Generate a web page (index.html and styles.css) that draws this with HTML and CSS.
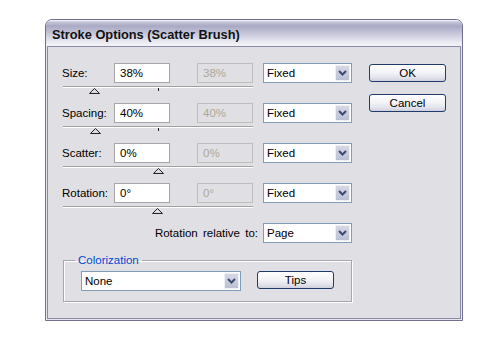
FILE: index.html
```html
<!DOCTYPE html>
<html>
<head>
<meta charset="utf-8">
<link rel="stylesheet" href="styles.css">
</head>
<body>
<div class="dialog">
  <div class="title">Stroke Options (Scatter Brush)</div>
  <div class="client">
    <div class="main">
      <div class="left">
        <div class="row">
          <div class="fields">
            <span class="label">Size:</span>
            <span class="input">38%</span>
            <span class="input disabled">38%</span>
            <span class="select"><span class="sel-text">Fixed</span><span class="arrow"><svg width="9" height="6" viewBox="0 0 9 6"><path d="M1 1 L4.5 4.5 L8 1" fill="none" stroke="#3c4a6c" stroke-width="2"/></svg></span></span>
          </div>
          <div class="slider">
            <span class="tick"></span>
            <svg class="thumb" style="left:26px" width="11" height="6" viewBox="0 0 11 6"><polygon points="5.5,0.5 10.5,5.5 0.5,5.5" fill="#dcdcdc" stroke="#222" stroke-width="1"/></svg>
          </div>
        </div>
        <div class="row">
          <div class="fields">
            <span class="label">Spacing:</span>
            <span class="input">40%</span>
            <span class="input disabled">40%</span>
            <span class="select"><span class="sel-text">Fixed</span><span class="arrow"><svg width="9" height="6" viewBox="0 0 9 6"><path d="M1 1 L4.5 4.5 L8 1" fill="none" stroke="#3c4a6c" stroke-width="2"/></svg></span></span>
          </div>
          <div class="slider">
            <span class="tick"></span>
            <svg class="thumb" style="left:27px" width="11" height="6" viewBox="0 0 11 6"><polygon points="5.5,0.5 10.5,5.5 0.5,5.5" fill="#dcdcdc" stroke="#222" stroke-width="1"/></svg>
          </div>
        </div>
        <div class="row">
          <div class="fields">
            <span class="label">Scatter:</span>
            <span class="input">0%</span>
            <span class="input disabled">0%</span>
            <span class="select"><span class="sel-text">Fixed</span><span class="arrow"><svg width="9" height="6" viewBox="0 0 9 6"><path d="M1 1 L4.5 4.5 L8 1" fill="none" stroke="#3c4a6c" stroke-width="2"/></svg></span></span>
          </div>
          <div class="slider">
            <svg class="thumb" style="left:90px" width="11" height="6" viewBox="0 0 11 6"><polygon points="5.5,0.5 10.5,5.5 0.5,5.5" fill="#dcdcdc" stroke="#222" stroke-width="1"/></svg>
          </div>
        </div>
        <div class="row">
          <div class="fields">
            <span class="label">Rotation:</span>
            <span class="input">0°</span>
            <span class="input disabled">0°</span>
            <span class="select"><span class="sel-text">Fixed</span><span class="arrow"><svg width="9" height="6" viewBox="0 0 9 6"><path d="M1 1 L4.5 4.5 L8 1" fill="none" stroke="#3c4a6c" stroke-width="2"/></svg></span></span>
          </div>
          <div class="slider">
            <svg class="thumb" style="left:89px" width="11" height="6" viewBox="0 0 11 6"><polygon points="5.5,0.5 10.5,5.5 0.5,5.5" fill="#dcdcdc" stroke="#222" stroke-width="1"/></svg>
          </div>
        </div>
        <div class="relrow">
          <span class="rel-label">Rotation relative to:</span>
          <span class="select"><span class="sel-text">Page</span><span class="arrow"><svg width="9" height="6" viewBox="0 0 9 6"><path d="M1 1 L4.5 4.5 L8 1" fill="none" stroke="#3c4a6c" stroke-width="2"/></svg></span></span>
        </div>
        <fieldset class="group">
          <legend>Colorization</legend>
          <div class="group-row">
            <span class="select wide"><span class="sel-text">None</span><span class="arrow"><svg width="9" height="6" viewBox="0 0 9 6"><path d="M1 1 L4.5 4.5 L8 1" fill="none" stroke="#3c4a6c" stroke-width="2"/></svg></span></span>
            <span class="button">Tips</span>
          </div>
        </fieldset>
      </div>
      <div class="right">
        <span class="button">OK</span>
        <span class="button">Cancel</span>
      </div>
    </div>
  </div>
</div>
</body>
</html>
```

FILE: styles.css
```css
html, body {
  margin: 0;
  padding: 0;
  background: #ffffff;
}

body {
  font-family: "Liberation Sans", Arial, sans-serif;
  font-size: 11.5px;
  color: #000;
}

.dialog {
  width: 418px;
  height: 302px;
  box-sizing: border-box;
  margin: 19px 0 0 45px;
  border: 1px solid #6f6f90;
  border-radius: 7px 7px 0 0;
  background: #e6e6ee;
  display: flex;
  flex-direction: column;
  overflow: hidden;
}

.title {
  height: 26px;
  flex: none;
  box-sizing: border-box;
  padding: 8px 0 0 6px;
  font-size: 12.8px;
  font-weight: bold;
  color: #111;
  line-height: 14px;
  background: linear-gradient(180deg, #fbfbff 0px, #c4c4d8 2px, #a9a9c5 6px, #c4c4d8 13px, #e9e9f1 22px, #f3f3f7 26px);
}

.client {
  flex: 1;
  margin: 0 1px 1px;
  border: 1px solid #8a8aa8;
  background: #e0dfe3;
  padding: 16px 0 0 14px;
}

.main {
  display: flex;
  gap: 17px;
}

.left {
  width: 290px;
}

.row {
  height: 40px;
}

.fields {
  display: flex;
  height: 20px;
  align-items: stretch;
}

.label {
  width: 52px;
  line-height: 20px;
}

.input {
  width: 56px;
  box-sizing: border-box;
  border: 1px solid #a6a6a6;
  background: #fff;
  padding-left: 5px;
  line-height: 18px;
}

.input.disabled {
  margin-left: 27px;
  background: #e0dfe3;
  border-color: #bdbdbd;
  color: #aca899;
}

.select {
  width: 89px;
  margin-left: 10px;
  box-sizing: border-box;
  border: 1px solid #7f9db9;
  background: #fff;
  display: flex;
  height: 20px;
}

.sel-text {
  flex: 1;
  padding-left: 3px;
  line-height: 18px;
}

.arrow {
  width: 15px;
  flex: none;
  box-sizing: border-box;
  margin: 1px;
  border: 1px solid #eef0f6;
  border-radius: 1px;
  background: linear-gradient(180deg, #d6d8e6, #bcc0d4);
  display: flex;
  align-items: center;
  justify-content: center;
}

.slider {
  position: relative;
  width: 190px;
  height: 0;
  margin: 3px 0 0 1px;
  border-top: 1px solid #a0a0a0;
  border-bottom: 1px solid #ffffff;
}

.tick {
  position: absolute;
  left: 95px;
  top: 1px;
  width: 1px;
  height: 3px;
  background: #222;
}

.thumb {
  position: absolute;
  top: 1px;
}

.relrow {
  display: flex;
  justify-content: flex-end;
  align-items: center;
  height: 20px;
}

.rel-label {
  line-height: 20px;
  word-spacing: 2px;
}

.relrow .select {
  margin-left: 5px;
}

.group {
  margin: 10px 0 0 1px;
  width: 289px;
  box-sizing: border-box;
  border: 1px solid #a7a7ab;
  box-shadow: inset 1px 1px 0 #fff, 1px 1px 0 #fff;
  padding: 4px 0 10px 0;
  min-width: 0;
}

.group legend {
  margin-left: 11px;
  padding: 0 3px;
  color: #0046d5;
  line-height: 14px;
}

.group-row {
  display: flex;
  align-items: flex-start;
  margin-left: 17px;
}

.select.wide {
  width: 160px;
  margin-left: 0;
}

.button {
  display: flex;
  align-items: center;
  justify-content: center;
  width: 77px;
  height: 18px;
  box-sizing: border-box;
  border: 1px solid #1f3a6c;
  border-radius: 3px;
  background: linear-gradient(180deg, #ffffff 0%, #f4f4f8 45%, #e2e2ec 80%, #cfcfdf 100%);
}

.group-row .button {
  margin-left: 16px;
}

.right {
  display: flex;
  flex-direction: column;
  gap: 12px;
  padding-top: 1px;
}
```
